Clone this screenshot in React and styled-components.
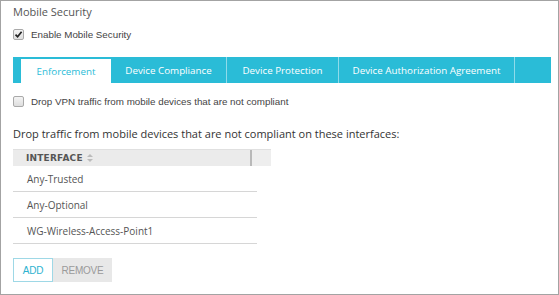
import styled, { createGlobalStyle } from "styled-components"

const Global = createGlobalStyle`
    html, body {
        margin: 0;
        padding: 0;
        background: #fff;
    }
`

const tabs = [
    { label: "Enforcement", w: 90 },
    { label: "Device Compliance", w: 116 },
    { label: "Device Protection", w: 112 },
    { label: "Device Authorization Agreement", w: 176 },
]

const rows = ["Any-Trusted", "Any-Optional", "WG-Wireless-Access-Point1"]

const Check = ({ checked }) => (
    <Box>
        {checked && (
            <svg width="9" height="9" viewBox="0 0 9 9">
                <path d="M1.5 4.6 L3.6 6.8 L7.6 1.8" fill="none" stroke="#222" strokeWidth="1.7" />
            </svg>
        )}
    </Box>
)

const App = () => {
    return (
        <Frame>
            <Global />
            <Title>Mobile Security</Title>
            <CheckRow top={7}>
                <Check checked />
                <span>Enable Mobile Security</span>
            </CheckRow>
            <TabBar>
                {tabs.map((t, i) => (
                    <Tab key={t.label} w={t.w} active={i === 0}>{t.label}</Tab>
                ))}
                <Tab w={36} />
            </TabBar>
            <CheckRow top={11}>
                <Check />
                <span>Drop VPN traffic from mobile devices that are not compliant</span>
            </CheckRow>
            <Label>Drop traffic from mobile devices that are not compliant on these interfaces:</Label>
            <Table>
                <Head>
                    <HeadCell>
                        INTERFACE
                        <svg width="6" height="8" viewBox="0 0 6 8">
                            <path d="M3 0 L6 3 L0 3 Z" fill="#bbb" />
                            <path d="M3 8 L6 5 L0 5 Z" fill="#bbb" />
                        </svg>
                    </HeadCell>
                    <HeadEnd />
                </Head>
                {rows.map((r) => (
                    <Row key={r}>{r}</Row>
                ))}
            </Table>
            <Buttons>
                <Button primary>ADD</Button>
                <Button>REMOVE</Button>
            </Buttons>
        </Frame>
    )
}

const Frame = styled.div`
    width: 559px;
    height: 295px;
    box-sizing: border-box;
    border: 1px solid #a3a3a3;
    padding: 3px 7px 0 12px;
    font-family: "Open Sans", sans-serif;
    color: #444;
`

const Title = styled.div`
    font-size: 11px;
    line-height: 16px;
    color: #555;
`

const CheckRow = styled.div`
    display: flex;
    align-items: center;
    gap: 7px;
    height: 14px;
    margin-top: ${(p) => p.top}px;
    font-family: "Liberation Sans", Arial, sans-serif;
    font-size: 9.8px;
    color: #444;
`

const Box = styled.div`
    width: 11px;
    height: 11px;
    box-sizing: border-box;
    border: 1px solid #a9a9a9;
    border-radius: 2px;
    background: linear-gradient(#f4f4f4, #dedede);
    display: flex;
    align-items: center;
    justify-content: center;
`

const TabBar = styled.div`
    display: flex;
    margin-top: 16px;
    width: 538px;
    height: 26px;
    box-sizing: border-box;
    padding: 2px 0 0 8px;
    background: #2abcd7;
`

const Tab = styled.div`
    width: ${(p) => p.w}px;
    flex: none;
    box-sizing: border-box;
    display: flex;
    align-items: center;
    justify-content: center;
    margin-top: ${(p) => (p.active ? 0 : -2)}px;
    font-size: 9.8px;
    color: ${(p) => (p.active ? "#2abcd7" : "#fff")};
    background: ${(p) => (p.active ? "#fff" : "transparent")};
    border-right: ${(p) => (p.active ? "none" : "1px solid #8fdbea")};
    &:last-child {
        border-right: none;
    }
`

const Label = styled.div`
    margin-top: 18px;
    font-size: 11px;
    line-height: 16px;
    color: #333;
`

const Table = styled.div`
    margin-top: 7px;
    width: 258px;
`

const Head = styled.div`
    display: flex;
    height: 17px;
    background: #ebebeb;
    border-top: 1px solid #e0e0e0;
    box-sizing: border-box;
`

const HeadCell = styled.div`
    width: 239px;
    box-sizing: border-box;
    border-right: 2px solid #b9b9b9;
    padding-left: 13px;
    display: flex;
    align-items: center;
    gap: 4px;
    font-family: "DejaVu Sans", sans-serif;
    font-weight: bold;
    font-size: 9px;
    letter-spacing: 0.2px;
    color: #555;
`

const HeadEnd = styled.div`
    flex: 1;
    background: #eeeeee;
`

const Row = styled.div`
    width: 244px;
    height: 26px;
    box-sizing: border-box;
    border-bottom: 1px solid #d6d6d6;
    padding-left: 14px;
    display: flex;
    align-items: center;
    font-size: 10px;
    color: #555;
`

const Buttons = styled.div`
    display: flex;
    margin-top: 14px;
`

const Button = styled.div`
    height: 24px;
    width: ${(p) => (p.primary ? 40 : 59)}px;
    box-sizing: border-box;
    display: flex;
    align-items: center;
    justify-content: center;
    font-family: "Liberation Sans", Arial, sans-serif;
    font-size: 10px;
    letter-spacing: -0.2px;
    color: ${(p) => (p.primary ? "#2eb2d0" : "#9a9a9a")};
    background: ${(p) => (p.primary ? "#fff" : "#e8e8e8")};
    border: 1px solid ${(p) => (p.primary ? "#9ed8e6" : "#e8e8e8")};
`

export default App
